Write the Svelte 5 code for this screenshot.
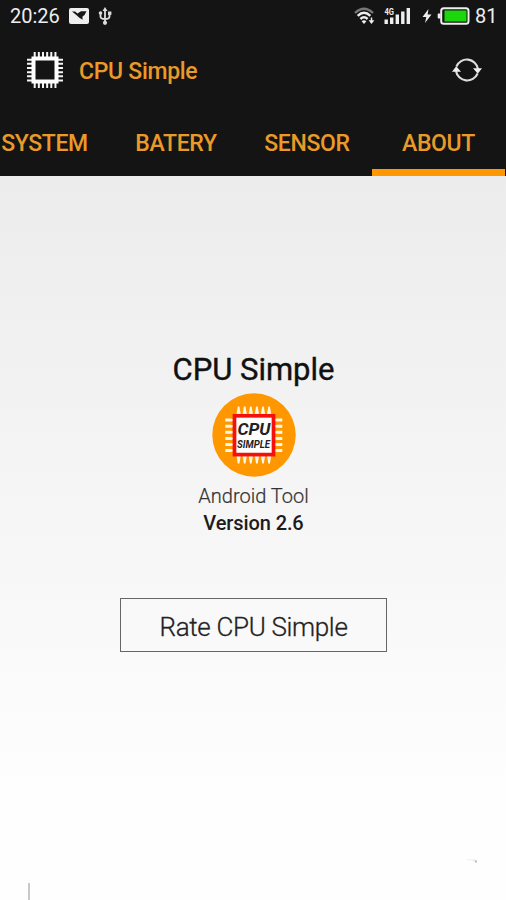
<script>
  const tabs = [
    { name: 'SYSTEM', x: 'system' },
    { name: 'BATERY', x: 'batery' },
    { name: 'SENSOR', x: 'sensor' },
    { name: 'ABOUT', x: 'about' }
  ];
  let active = $state('ABOUT');
  const pins = [0, 1, 2, 3, 4, 5];
</script>

<div class="screen">
  <header>
    <div class="status">
      <span class="time">20:26</span>
      <svg class="photo" width="20" height="16" viewBox="0 0 20 16">
        <rect width="20" height="16" rx="2" fill="#eee" />
        <path d="M3 3.5 6 3.5 8.5 5.5 12 3.2 17.5 3.2 15.5 7 13.5 8.5 13.5 11.8 10 9.5 8.2 7.8Z" fill="#161616" />
      </svg>
      <svg class="usb" width="14" height="18" viewBox="0 0 14 18" fill="none" stroke="#ddd" stroke-width="1.8">
        <path d="M7 3V16M2.5 6V9.5Q2.5 12 7 12Q11.5 12 11.5 9.5V6" />
        <path d="M7 0 9.5 4H4.5Z" fill="#ddd" stroke="none" />
        <circle cx="2.5" cy="6" r="1.8" fill="#ddd" stroke="none" />
        <rect x="10" y="4.5" width="3.4" height="3.4" fill="#ddd" stroke="none" />
        <circle cx="7" cy="15.8" r="2.1" fill="#ddd" stroke="none" />
      </svg>
      <div class="right">
        <svg width="22" height="18" viewBox="0 0 22 18" fill="none" stroke-width="2.4">
          <path d="M1 6Q10 -2.5 19 6" stroke="#777" />
          <path d="M3.7 8.8Q10 2.8 16.3 8.8M6.4 12Q10 8.7 13.6 12" stroke="#eee" />
          <path d="M7.6 14.2Q10 12.2 12.4 14.2L10 17Z" fill="#eee" />
          <path d="M17.5 10.5V14" stroke="#eee" stroke-width="1.5" /><path d="M14.6 13.2H20.4L17.5 17Z" fill="#eee" />
        </svg>
        <svg class="signal" width="27" height="18" viewBox="0 0 27 18" fill="#eee">
          <path d="M.5 12.5h3.4V17H.5zM6 10.5h3.4V17H6zM11.6 7.5H15V17h-3.4zM17.1 4.5h3.4V17h-3.4zM22.6 1H26v16h-3.4z" />
          <text x="0.4" y="7.5" font-size="8.5" font-weight="700" textLength="9.5" lengthAdjust="spacingAndGlyphs">4G</text>
        </svg>
        <svg class="bolt" width="10" height="14" viewBox="0 0 10 14"><path d="M6.5 0 .5 8H4.3L3 14 9.5 5.5H5.6Z" fill="#eee" /></svg>
        <svg class="battery" width="33" height="18" viewBox="0 0 33 18">
          <path d="M3.5 6.5H1.5Q.7 6.5.7 7.5V10.5Q.7 11.5 1.5 11.5H3.5Z" fill="#eee" />
          <rect x="4.2" y="1.2" width="27.3" height="15.6" rx="2.5" fill="#161616" stroke="#eee" stroke-width="2" />
          <rect x="7.5" y="3.5" width="22" height="11" fill="#1bd60b" />
        </svg>
        <span class="pct">81</span>
      </div>
    </div>

    <div class="appbar">
      <svg class="chip" width="38" height="38" viewBox="0 0 38 38">
        {#each pins as i}
          <path d="M{8.7 + i * 4.15} 1V37M1 {8.7 + i * 4.15}H37" stroke="#f4f4f4" stroke-width="2" />
        {/each}
        <rect x="7.5" y="7.5" width="23" height="23" fill="#141414" stroke="#fff" stroke-width="4" />
      </svg>
      <h1>CPU Simple</h1>
      <svg class="refresh" width="30" height="26" viewBox="0 0 30 26" fill="none" stroke="#ddd" stroke-width="2.1">
        <path d="M4.4 9.5A11.3 11.3 0 0 1 26 12M25.6 16.5A11.3 11.3 0 0 1 4 14" />
        <path d="M21 11.2H30L25.8 16.7ZM0 14.8H9L4.2 9.3Z" fill="#eee" stroke="none" />
      </svg>
    </div>

    <nav>
      {#each tabs as tab}
        <button class="tab {tab.x}" class:active={active === tab.name} onclick={() => (active = tab.name)}>
          <span>{tab.name}</span>
        </button>
      {/each}
    </nav>
  </header>

  <main>
    <h2>CPU Simple</h2>
    <svg class="logo" width="84" height="84" viewBox="0 0 84 84">
      <circle cx="42" cy="42" r="41.7" fill="#ff9800" />
      {#each pins as i}
        <path d="M{25.8 + i * 6.1} 13.5h1.6l1.2 7v43l-1.2 7h-1.6l-1.2-7v-43Z" fill="#fff6e5" />
        <path d="M13.3 {25.6 + i * 6.1}h5l3 .5h41l3-.5h5v3h-5l-3-.5h-41l-3 .5h-5Z" fill="#fff6e5" />
      {/each}
      <rect x="22.5" y="22.8" width="39" height="38.8" fill="#fff" stroke="#f5100b" stroke-width="3.7" />
      <text x="25.4" y="42.2" font-size="16" textLength="33" lengthAdjust="spacingAndGlyphs">CPU</text>
      <text x="25" y="55.3" font-size="11" textLength="33" lengthAdjust="spacingAndGlyphs">SIMPLE</text>
    </svg>
    <p class="tool">Android Tool</p>
    <p class="version">Version 2.6</p>
    <button class="rate"><span>Rate CPU Simple</span></button>
  </main>

  <footer>
    <i class="bar"></i>
    <svg width="12" height="5" viewBox="0 0 12 5"><path d="M0 .8H8" stroke="#eee" /><path d="M5 1.5H9V3" fill="#ddd" /><path d="M8 1.5h2v2H8z" fill="#bbb" /></svg>
  </footer>
</div>

<style>
  :global(body) { background: #fff; }
  .screen {
    width: 506px; height: 900px; overflow: hidden; display: flex; flex-direction: column;
    font-family: Roboto, "Liberation Sans", sans-serif;
    background: linear-gradient(#ececec 176px, #fefefe 800px);
  }
  header { background: #141414; height: 176px; flex: none; display: flex; flex-direction: column; }
  svg { display: block; flex: none; }
  button { font: inherit; padding: 0; border: 0; background: none; border-radius: 0; }
  h1, h2, p { margin: 0; white-space: nowrap; }
  .status { height: 32px; display: flex; align-items: center; color: #eee; font-size: 20px; line-height: 32px; }
  .time { width: 59px; padding-left: 10px; box-sizing: border-box; }
  .photo { margin-left: 10px; }
  .usb { margin-left: 9px; }
  .right { display: flex; align-items: center; margin-left: auto; padding-right: 9px; }
  .signal { margin-left: 8px; }
  .bolt { margin-left: 11px; }
  .battery { margin-left: 5px; }
  .pct { width: 22px; margin-left: 5px; }
  .appbar { height: 76px; display: flex; align-items: center; padding: 0 24px 0 26px; }
  .chip { margin-right: 15px; }
  h1 { color: #e99a28; font-size: 23px; font-weight: 500; line-height: 30px; margin-top: 4px; letter-spacing: -.3px; }
  .refresh { margin-left: auto; }
  nav { height: 68px; display: flex; padding-right: 1px; }
  .tab {
    color: #e99a28; font-size: 23px; font-weight: 500; line-height: 68px; height: 68px; letter-spacing: -.35px;
    display: flex; justify-content: center; box-sizing: border-box; white-space: nowrap; padding-top: 2px;
  }
  .system { width: 89px; }
  .batery { width: 174px; }
  .sensor { width: 109px; flex: none; }
  .about { width: 133px; }
  .sensor span { margin-left: -21px; }
  .active { border-bottom: 7px solid #ff9800; }
  main { display: flex; flex-direction: column; align-items: center; padding: 174px 0 0 1px; flex: none; }
  h2 { font-size: 31px; font-weight: 400; line-height: 40px; color: #111; -webkit-text-stroke: .4px #111; }
  .logo { margin-top: 3px; }
  .logo text { font-weight: 700; font-style: italic; fill: #222; }
  .tool { font-size: 20px; line-height: 26px; margin-top: 6px; color: #333; font-weight: 300; -webkit-text-stroke: .2px #333; }
  .version { font-size: 20px; line-height: 26px; margin-top: 1px; color: #1c1c1c; font-weight: 500; letter-spacing: -.1px; }
  .rate {
    width: 267px; height: 54px; margin-top: 62px; border: 1.5px solid #666; padding-top: 3px;
    font-size: 26px; font-weight: 300; color: #222; box-sizing: border-box; letter-spacing: -.33px;
    -webkit-text-stroke: .3px #222;
  }
  footer { margin-top: auto; height: 41px; display: flex; justify-content: space-between; padding: 0 27px 0 28px; }
  .bar { width: 2px; height: 17px; background: #c8c8c8; align-self: flex-end; }
</style>
